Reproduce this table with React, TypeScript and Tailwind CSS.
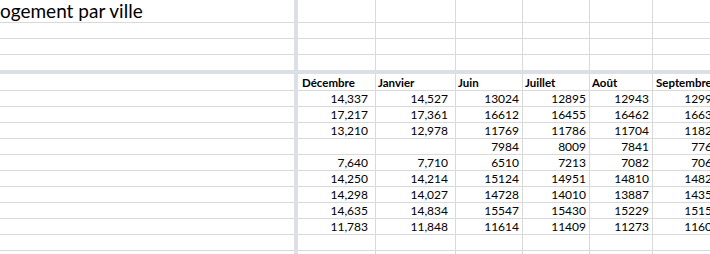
import React from "react";

const headers = ["Décembre", "Janvier", "Juin", "Juillet", "Août", "Septembre"];
const widths = ["w-[78px]", "w-[80px]", "w-[67px]", "w-[67px]", "w-[63px]", "w-[70px]"];
const hpad = ["pl-[4px]", "pl-[2px]", "pl-[2px]", "pl-[2px]", "pl-[2px]", "pl-[3px]"];
const npad = ["pr-[7px]", "pr-[7px]", "pr-[3px]", "pr-[3px]", "pr-[3px]", "pr-[3px]"];

const data: string[][] = [
  ["14,337", "14,527", "13024", "12895", "12943", "12990"],
  ["17,217", "17,361", "16612", "16455", "16462", "16630"],
  ["13,210", "12,978", "11769", "11786", "11704", "11820"],
  ["", "", "7984", "8009", "7841", "7760"],
  ["7,640", "7,710", "6510", "7213", "7082", "7060"],
  ["14,250", "14,214", "15124", "14951", "14810", "14820"],
  ["14,298", "14,027", "14728", "14010", "13887", "14350"],
  ["14,635", "14,834", "15547", "15430", "15229", "15150"],
  ["11,783", "11,848", "11614", "11409", "11273", "11600"],
  ["", "", "", "", "", ""],
  ["", "", "", "", "", ""],
];

function EmptyRow({ h, border = true }: { h: string; border?: boolean }) {
  return (
    <div className={`flex shrink-0 ${h} ${border ? "border-b border-[#d9d9d9]" : ""}`}>
      {widths.map((w, i) => (
        <div key={i} className={`${w} shrink-0 h-full border-r border-[#d9d9d9]`} />
      ))}
    </div>
  );
}

export default function App() {
  return (
    <div
      className="w-[710px] h-[254px] overflow-hidden bg-white flex flex-col text-black"
      style={{ fontFamily: "Lato, 'Noto Sans', sans-serif" }}
    >
      {/* top frozen section */}
      <div className="flex h-[70px] shrink-0">
        <div className="w-[294px] shrink-0 flex flex-col">
          <div className="h-[23px] border-b border-[#d9d9d9] text-[19px] leading-[22px] whitespace-nowrap overflow-hidden">
            ogement par ville
          </div>
          <div className="h-[16px] border-b border-[#d9d9d9]" />
          <div className="h-[16px] border-b border-[#d9d9d9]" />
          <div className="h-[15px]" />
        </div>
        <div className="w-[4px] shrink-0 bg-[#dcdfe6]" />
        <div className="flex-1 flex flex-col overflow-hidden">
          <EmptyRow h="h-[23px]" />
          <EmptyRow h="h-[16px]" />
          <EmptyRow h="h-[16px]" />
          <EmptyRow h="h-[15px]" border={false} />
        </div>
      </div>
      <div className="h-[4px] shrink-0 bg-[#dcdfe6]" />
      {/* bottom section */}
      <div className="flex flex-1 min-h-0">
        <div className="w-[294px] shrink-0 flex flex-col">
          <div className="h-[17px] shrink-0 border-b border-[#d9d9d9]" />
          {data.map((_, i) => (
            <div key={i} className="h-[16px] shrink-0 border-b border-[#d9d9d9]" />
          ))}
        </div>
        <div className="w-[4px] shrink-0 bg-[#dcdfe6]" />
        <div className="flex-1 flex flex-col overflow-hidden">
          <div className="flex h-[17px] shrink-0 border-b border-[#d9d9d9]">
            {headers.map((h, i) => (
              <div
                key={i}
                className={`${widths[i]} ${hpad[i]} shrink-0 h-full border-r border-[#d9d9d9] font-bold text-[11.5px] leading-[17px] whitespace-nowrap overflow-hidden`}
              >
                {h}
              </div>
            ))}
          </div>
          {data.map((row, r) => (
            <div key={r} className="flex h-[16px] shrink-0 border-b border-[#d9d9d9]">
              {row.map((v, i) => (
                <div
                  key={i}
                  className={`${widths[i]} ${npad[i]} shrink-0 h-full border-r border-[#d9d9d9] text-right text-[12px] leading-[15px] whitespace-nowrap overflow-hidden`}
                >
                  {v}
                </div>
              ))}
            </div>
          ))}
        </div>
      </div>
    </div>
  );
}
